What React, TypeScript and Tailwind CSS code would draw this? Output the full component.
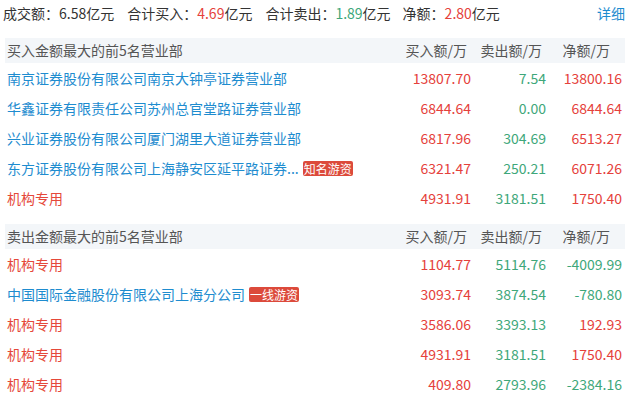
import React from "react";

type Row = {
  name: string;
  tag?: string;
  buy: string;
  sell: string;
  net: string;
  inst?: boolean;
};

const buyRows: Row[] = [
  { name: "南京证券股份有限公司南京大钟亭证券营业部", buy: "13807.70", sell: "7.54", net: "13800.16" },
  { name: "华鑫证券有限责任公司苏州总官堂路证券营业部", buy: "6844.64", sell: "0.00", net: "6844.64" },
  { name: "兴业证券股份有限公司厦门湖里大道证券营业部", buy: "6817.96", sell: "304.69", net: "6513.27" },
  { name: "东方证券股份有限公司上海静安区延平路证券...", tag: "知名游资", buy: "6321.47", sell: "250.21", net: "6071.26" },
  { name: "机构专用", inst: true, buy: "4931.91", sell: "3181.51", net: "1750.40" },
];

const sellRows: Row[] = [
  { name: "机构专用", inst: true, buy: "1104.77", sell: "5114.76", net: "-4009.99" },
  { name: "中国国际金融股份有限公司上海分公司", tag: "一线游资", buy: "3093.74", sell: "3874.54", net: "-780.80" },
  { name: "机构专用", inst: true, buy: "3586.06", sell: "3393.13", net: "192.93" },
  { name: "机构专用", inst: true, buy: "4931.91", sell: "3181.51", net: "1750.40" },
  { name: "机构专用", inst: true, buy: "409.80", sell: "2793.96", net: "-2384.16" },
];

function Section({ title, rows }: { title: string; rows: Row[] }) {
  return (
    <div>
      <div className="flex items-center h-[25px] bg-[#f3f6f9] text-[#555] pl-[2px]">
        <div className="flex-1">{title}</div>
        <div className="w-[75px] text-right pr-[4px]">买入额/万</div>
        <div className="w-[75px] text-right pr-[4px]">卖出额/万</div>
        <div className="w-[79px] text-right pr-[15px]">净额/万</div>
      </div>
      {rows.map((r, i) => (
        <div key={i} className="flex items-center h-[30px] pl-[2px]">
          <div className="flex-1 flex items-center min-w-0">
            <span className={r.inst ? "text-[#e5483a] whitespace-nowrap" : "text-[#1e8ccf] whitespace-nowrap"}>{r.name}</span>
            {r.tag && (
              <span className="ml-[4px] bg-[#dc4a3b] text-white text-[12px] leading-[15px] px-[1px] rounded-[2px] whitespace-nowrap">
                {r.tag}
              </span>
            )}
          </div>
          <div className="w-[75px] text-right text-[#e5413b]">{r.buy}</div>
          <div className="w-[75px] text-right text-[#3ea77a]">{r.sell}</div>
          <div className={r.net.startsWith("-") ? "w-[79px] text-right pr-[3px] text-[#3ea77a]" : "w-[79px] text-right pr-[3px] text-[#e5413b]"}>
            {r.net}
          </div>
        </div>
      ))}
    </div>
  );
}

export default function App() {
  return (
    <div
      className="w-[630px] h-[399px] bg-white overflow-hidden text-[14px] text-[#333]"
      style={{ fontFamily: '"Microsoft YaHei", "Noto Sans CJK SC", sans-serif' }}
    >
      <div className="flex items-center h-[27px] pl-[3px] pr-[5px] mb-[11px]">
        <span>成交额：6.58亿元</span>
        <span className="ml-[13px]">
          合计买入：<span className="text-[#e5413b]">4.69</span>亿元
        </span>
        <span className="ml-[13px]">
          合计卖出：<span className="text-[#3ea77a]">1.89</span>亿元
        </span>
        <span className="ml-[12px]">
          净额：<span className="text-[#e5413b]">2.80</span>亿元
        </span>
        <span className="ml-auto text-[#1e8ccf]">详细</span>
      </div>
      <div className="mx-[5px]">
        <Section title="买入金额最大的前5名营业部" rows={buyRows} />
        <div className="h-[11px]" />
        <Section title="卖出金额最大的前5名营业部" rows={sellRows} />
      </div>
    </div>
  );
}
